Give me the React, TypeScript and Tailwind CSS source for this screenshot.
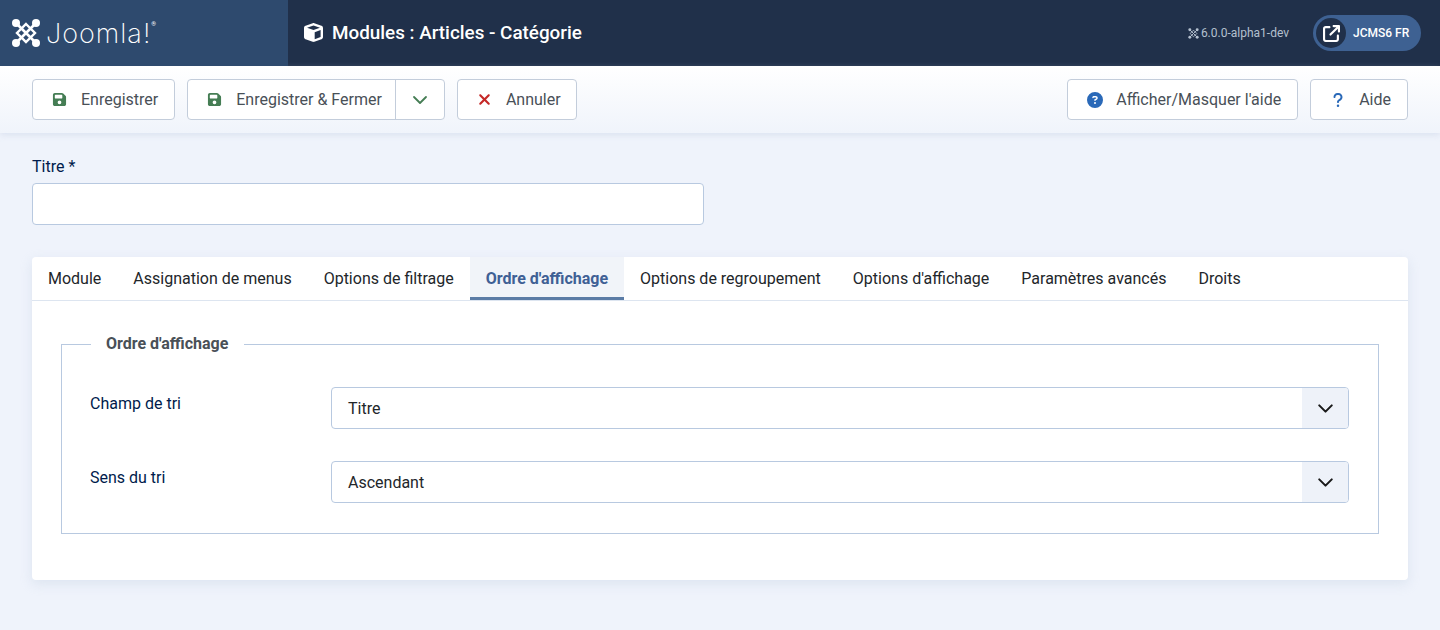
import { ChevronDown } from "lucide-react";
import { FaArrowUpRightFromSquare, FaCircleQuestion, FaCube, FaFloppyDisk, FaQuestion, FaXmark } from "react-icons/fa6";
import type { ReactNode } from "react";

const tabs = [
  "Module",
  "Assignation de menus",
  "Options de filtrage",
  "Ordre d'affichage",
  "Options de regroupement",
  "Options d'affichage",
  "Paramètres avancés",
  "Droits",
];

function JoomlaMark({ size, className }: { size: number; className?: string }) {
  return (
    <svg width={size} height={size} viewBox="0 0 30 30" fill="none" stroke="currentColor" className={className}>
      <path d="M5 5 L25 25 M25 5 L5 25" strokeWidth="2.6" />
      <path d="M15 6 L24 15 L15 24 L6 15 Z" strokeWidth="2.4" />
      <g fill="currentColor" stroke="none">
        <circle cx="5" cy="5" r="4" />
        <circle cx="25" cy="5" r="4" />
        <circle cx="5" cy="25" r="4" />
        <circle cx="25" cy="25" r="4" />
      </g>
    </svg>
  );
}

function ToolButton({ icon, label, className }: { icon: ReactNode; label: string; className?: string }) {
  return (
    <button className={`flex h-[41px] items-center rounded border border-[#c3cddb] bg-white pr-4 text-[#495057] ${className ?? ""}`}>
      <span className="flex w-[48px] shrink-0 justify-center pl-[5px]">{icon}</span>
      <span>{label}</span>
    </button>
  );
}

function SelectField({ label, value }: { label: string; value: string }) {
  return (
    <div className="flex">
      <div className="w-[241px] shrink-0 pt-[5px] text-[#001b4c]">{label}</div>
      <div className="flex h-[42px] flex-1 items-center justify-between overflow-hidden rounded border border-[#b8c9e0] bg-white">
        <span className="pl-4 pt-px text-[#22262a]">{value}</span>
        <span className="flex h-full w-[46px] items-center justify-center bg-[#eef2f9]">
          <ChevronDown size={25} strokeWidth={2} className="text-[#1a1a1a]" />
        </span>
      </div>
    </div>
  );
}

export default function App() {
  return (
    <div className="min-h-[630px] bg-[#eff3fb] font-['Roboto',sans-serif] text-base">
      <header className="flex h-[66px] items-center bg-[#20304a] text-white">
        <div className="flex h-full w-[288px] shrink-0 items-center bg-[#2e4a6e] pl-[11px]">
          <JoomlaMark size={30} className="text-white" />
          <span className="ml-[5px] font-['Inter',sans-serif] text-[27px] font-extralight leading-none tracking-[1px]">Joomla!</span>
          <sup className="mt-[-12px] text-[6px]">®</sup>
        </div>
        <div className="flex items-center pl-4">
          <FaCube size={19} />
          <h1 className="ml-[9px] text-[18.85px] font-medium">Modules : Articles - Catégorie</h1>
        </div>
        <div className="ml-auto flex items-center pr-[19px]">
          <JoomlaMark size={11} className="text-[#b4c0cf]" />
          <span className="ml-[2px] text-xs text-[#b4c0cf]">6.0.0-alpha1-dev</span>
          <div className="ml-6 flex h-9 w-[108px] items-center rounded-full bg-[#3e6192] pl-[3px]">
            <span className="flex h-[30px] w-[30px] items-center justify-center rounded-full bg-[#20304a]">
              <FaArrowUpRightFromSquare size={17} />
            </span>
            <span className="ml-[7px] text-xs font-medium">JCMS6 FR</span>
          </div>
        </div>
      </header>

      <div className="flex h-[67px] items-center gap-3 bg-gradient-to-b from-white to-[#f0f4fb] px-8 shadow-[0_2px_6px_rgba(180,195,220,0.35)]">
        <ToolButton icon={<FaFloppyDisk size={15} className="text-[#457d54]" />} label="Enregistrer" />
        <div className="flex h-[41px] items-center rounded border border-[#c3cddb] bg-white text-[#495057]">
          <span className="flex w-[48px] justify-center pl-[5px]">
            <FaFloppyDisk size={15} className="text-[#457d54]" />
          </span>
          <span className="pr-[13px]">Enregistrer &amp; Fermer</span>
          <span className="flex h-full w-[49px] items-center justify-center border-l border-[#c3cddb]">
            <ChevronDown size={24} strokeWidth={1.8} className="text-[#457d54]" />
          </span>
        </div>
        <ToolButton icon={<FaXmark size={17} className="text-[#c52827]" />} label="Annuler" className="w-[120px]" />
        <div className="ml-auto flex gap-3">
          <ToolButton icon={<FaCircleQuestion size={16} className="text-[#2a69b8]" />} label="Afficher/Masquer l'aide" />
          <ToolButton icon={<FaQuestion size={16} className="text-[#2a69b8]" />} label="Aide" />
        </div>
      </div>

      <main className="px-8 pt-[22px]">
        <label className="block text-[#001b4c]">Titre *</label>
        <div className="mt-[4px] h-[42px] w-[672px] rounded border border-[#b8c9e0] bg-white" />

        <section className="mt-8 rounded bg-white shadow-[0_4px_12px_rgba(180,195,220,0.3)]">
          <nav className="flex h-11 border-b border-[#dde5f0]">
            {tabs.map((tab) =>
              tab === "Ordre d'affichage" ? (
                <div key={tab} className="flex items-center border-b-[3px] border-[#5b7ca6] bg-[#f1f4f9] px-4 pt-[3px] font-bold text-[#3f6095]">
                  {tab}
                </div>
              ) : (
                <div key={tab} className="flex items-center px-4 text-[#22262a]">
                  {tab}
                </div>
              ),
            )}
          </nav>
          <div className="px-[29px] pb-[46px] pt-[31px]">
            <fieldset className="border border-[#b8c9e0] pb-[30px] pl-7 pr-[29px] pt-[31px]">
              <legend className="ml-px pl-[15px] pr-[16px] font-bold text-[#495057]">Ordre d'affichage</legend>
              <div className="flex flex-col gap-8">
                <SelectField label="Champ de tri" value="Titre" />
                <SelectField label="Sens du tri" value="Ascendant" />
              </div>
            </fieldset>
          </div>
        </section>
      </main>
    </div>
  );
}
